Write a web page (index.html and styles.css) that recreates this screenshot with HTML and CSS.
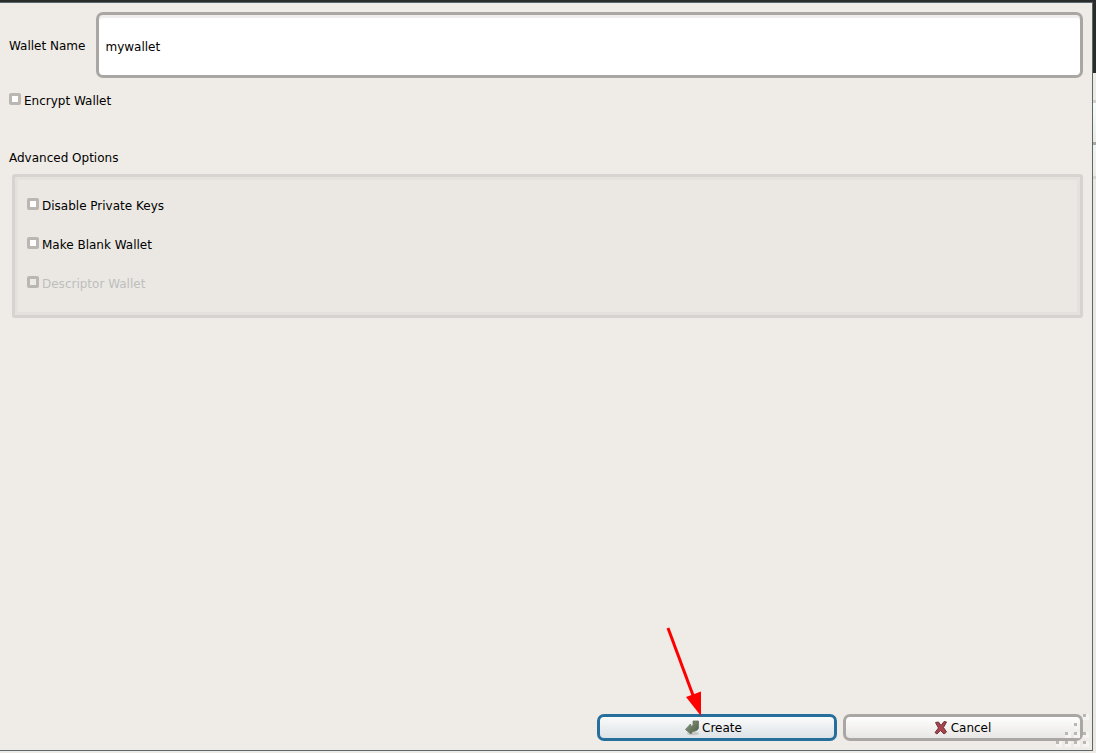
FILE: index.html
```html
<!DOCTYPE html>
<html lang="en">
<head>
<meta charset="utf-8">
<title>Create Wallet</title>
<link rel="stylesheet" href="styles.css">
</head>
<body>
<form class="dialog">
  <div class="name-row">
    <label for="wallet-name">Wallet Name</label>
    <input class="name-input" id="wallet-name" type="text" value="mywallet">
  </div>
  <label class="check"><input type="checkbox"><span>Encrypt Wallet</span></label>
  <h2 class="group-title" id="advanced">Advanced Options</h2>
  <div class="group" role="group" aria-labelledby="advanced">
    <label class="check"><input type="checkbox"><span>Disable Private Keys</span></label>
    <label class="check"><input type="checkbox"><span>Make Blank Wallet</span></label>
    <label class="check disabled"><input type="checkbox" disabled><span>Descriptor Wallet</span></label>
  </div>
  <div class="actions">
    <button class="button primary" type="button">
      <svg class="icon" viewBox="0 0 16 16" aria-hidden="true">
        <defs><linearGradient id="leaf" x2="1" y2="1"><stop stop-color="#93a08b"/><stop offset="1" stop-color="#46583b"/></linearGradient></defs>
        <ellipse cx="9" cy="13.500" rx="6" ry="1.800" fill="#c3c8c6"/>
        <path d="M9 1h5.500v7q-.5 3-6 3.500l-1.500 2.500L1.500 9.500 6.500 4l.5 2.500q2-.3 2-2z" fill="url(#leaf)" stroke="#66735c" stroke-width=".8" stroke-linejoin="round"/>
      </svg>
      <span>Create</span>
    </button>
    <button class="button secondary" type="button">
      <svg class="icon" viewBox="0 0 16 16" aria-hidden="true">
        <path d="M2.500 2.500 5.500 2 8 5.500 11 1.500l2.500.5L10.500 7.500l3 4.500-2.500 2L7.500 10.500 4 14l-2-1.500L5.500 8z" fill="#a9434c" stroke="#6b343a" stroke-width="1" stroke-linejoin="round"/>
      </svg>
      <span>Cancel</span>
    </button>
    <svg class="grip" viewBox="0 0 36 33" aria-hidden="true">
      <path fill="#f6f4f2" d="M27 0h6v6h-6zM18 9h6v6h-6zM9 18h6v6h-6zM18 18h6v6h-6zM27 18h6v6h-6zM0 27h6v6h-6zM9 27h6v6h-6zM18 27h6v6h-6zM27 27h6v6h-6z"/>
      <path fill="#bab7b3" d="M27 0h3v3h-3zM18 9h3v3h-3zM9 18h3v3h-3zM18 18h3v3h-3zM27 18h3v3h-3zM0 27h3v3h-3zM9 27h3v3h-3zM18 27h3v3h-3zM27 27h3v3h-3z"/>
    </svg>
  </div>
  <svg class="arrow" viewBox="0 0 40 90" aria-hidden="true">
    <path d="M5 2 31 72" stroke="#f00" stroke-width="3" fill="none"/>
    <path d="M23 71 38 65.500V90z" fill="#f00"/>
  </svg>
</form>
<div class="backdrop" aria-hidden="true"></div>
</body>
</html>
```
FILE: styles.css
```css
* { box-sizing: border-box; }

body {
  margin: 0;
  min-height: 100vh;
  padding: 2px 0;
  display: flex;
  background: linear-gradient(#2b2b2c 2px, #eeebe7 2px);
  font: 12px/16px "DejaVu Sans", sans-serif;
  color: #000;
}

.dialog {
  position: relative;
  flex: 1;
  display: flex;
  flex-direction: column;
  align-items: stretch;
  padding: 9px;
  border: solid #59686c;
  border-width: 1px 1px 1px 0;
  background: #efebe6;
}

.backdrop {
  width: 3px;
  margin-top: -2px;
  background: linear-gradient(#2b2b2c 73px, #eeebe7 73px 100px, #d3d0cd 100px 103px, #fafafa 103px, #eeebe7 142px, #aaa6a3 142px 145px, #f5f3f1 145px, #eeebe7 176px, #d6d3d0 176px 179px, #ebe8e3 179px);
}

.name-row { display: flex; align-items: center; gap: 11px; }
.name-row label { padding-top: 2px; }

.name-input {
  flex: 1;
  height: 66px;
  padding: 4px 6px 0;
  border: 3px solid #aaa6a3;
  border-radius: 7px;
  background: #fff;
  box-shadow: inset 0 3px #efedee;
  font: inherit;
  color: inherit;
  outline: 0;
}

.check { display: flex; align-items: flex-start; gap: 3px; }
.name-row + .check { margin-top: 15px; }

.check input {
  appearance: none;
  width: 12px;
  height: 12px;
  margin: 0;
  border: 3px solid #bab7b3;
  border-radius: 2px;
  background: #fff;
}
.check input:disabled { background: #eeebe6; }
.disabled { color: #bebebe; }

.group-title { margin: 41px 0 0; font: inherit; }

.group {
  margin: 8px 0 0 3px;
  padding: 21px 12px 23px;
  display: flex;
  flex-direction: column;
  gap: 23px;
  border: 3px solid #d6d3d0;
  border-radius: 3px;
  background: #ebe8e3;
  box-shadow: inset 0 0 0 3px #e5e2de;
}

.actions {
  position: relative;
  display: flex;
  justify-content: flex-end;
  gap: 6px;
  margin-top: auto;
}

.button {
  width: 240px;
  height: 27px;
  padding: 0;
  display: flex;
  align-items: center;
  justify-content: center;
  gap: 2px;
  border: 3px solid #aaa6a3;
  border-radius: 7px;
  background: linear-gradient(#fefefe, #e9e7e5);
  font: inherit;
  color: inherit;
}
.primary { padding-right: 8px; border-color: #266e9b; background: linear-gradient(#fafbfb, #dce2e6); }
.secondary { padding-right: 2px; }

.icon { width: 16px; height: 16px; }

.grip {
  position: absolute;
  right: -9px;
  bottom: -6px;
  width: 36px;
  height: 33px;
}

.arrow {
  position: absolute;
  right: 389px;
  bottom: 34px;
  width: 40px;
  height: 90px;
  pointer-events: none;
}
```
